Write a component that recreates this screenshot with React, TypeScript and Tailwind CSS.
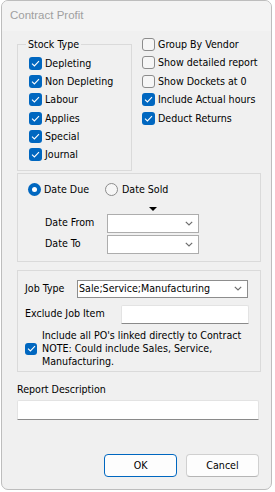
import React from "react";

const FONT = "font-['DejaVu_Sans_Condensed','Liberation_Sans',sans-serif]";

function CheckBox({ checked, small }: { checked: boolean; small?: boolean }) {
  const size = small ? "w-[12px] h-[12px]" : "w-[13px] h-[13px]";
  if (checked) {
    return (
      <div className={`${size} shrink-0 rounded-[3px] bg-[#0067c0] flex items-center justify-center`}>
        <svg width="9" height="7" viewBox="0 0 9 7">
          <path d="M1 3.6 L3.4 6 L8 1.2" stroke="white" strokeWidth="1.1" fill="none" />
        </svg>
      </div>
    );
  }
  return <div className={`${size} shrink-0 rounded-[3px] border border-[#8c8c8c] bg-[#f6f6f6]`} />;
}

function Radio({ checked }: { checked: boolean }) {
  if (checked) {
    return (
      <div className="w-[13px] h-[13px] shrink-0 rounded-full bg-[#0067c0] flex items-center justify-center">
        <div className="w-[5px] h-[5px] rounded-full bg-white" />
      </div>
    );
  }
  return <div className="w-[13px] h-[13px] shrink-0 rounded-full border border-[#8c8c8c] bg-[#f6f6f6]" />;
}

function Chevron() {
  return (
    <svg width="8" height="5" viewBox="0 0 8 5" className="shrink-0">
      <path d="M0.8 0.8 L4 4 L7.2 0.8" stroke="#707070" strokeWidth="1.2" fill="none" />
    </svg>
  );
}

function CheckRow({ checked, label, tall }: { checked: boolean; label: string; tall?: boolean }) {
  return (
    <div className={`flex items-center ${tall ? "h-[18.5px]" : "h-[18.2px]"}`}>
      <CheckBox checked={checked} />
      <span className="ml-[3px] whitespace-nowrap leading-[13px]">{label}</span>
    </div>
  );
}

export default function App() {
  return (
    <div className={`w-[275px] h-[492px] bg-white overflow-hidden ${FONT} text-[10.6px] text-black`}>
      <div className="ml-[1px] w-[271px] h-[490px] border border-[#bdbdbd] rounded-[7px] bg-[#f0f0f0] overflow-hidden flex flex-col">
        <div className="h-[30px] shrink-0 bg-[#f3f3f3] flex items-center pl-[8px] font-['Liberation_Sans',sans-serif] text-[11.5px] text-[#a0a0a0]">
          Contract Profit
        </div>
        <div className="flex-1 flex flex-col pl-[15px]">
          <div className="flex items-start">
            <fieldset className="mt-[6.5px] w-[115px] border border-[#dadada] pl-[11px] pt-[4px] pb-[6px]">
              <legend className="ml-[-3px] px-[2px] leading-[13px]">Stock Type</legend>
              <CheckRow checked label="Depleting" />
              <CheckRow checked label="Non Depleting" />
              <CheckRow checked label="Labour" />
              <CheckRow checked label="Applies" />
              <CheckRow checked label="Special" />
              <CheckRow checked label="Journal" />
            </fieldset>
            <div className="ml-[10px] mt-[4px] flex flex-col">
              <CheckRow tall checked={false} label="Group By Vendor" />
              <CheckRow tall checked={false} label="Show detailed report" />
              <CheckRow tall checked={false} label="Show Dockets at 0" />
              <CheckRow tall checked label="Include Actual hours" />
              <CheckRow tall checked label="Deduct Returns" />
            </div>
          </div>

          <div className="mt-[2px] w-[244px] border border-[#dadada] pl-[10px] pt-[9px] pb-[7px] flex flex-col">
            <div className="flex items-center h-[14px]">
              <div className="w-[77px] flex items-center">
                <Radio checked />
                <span className="ml-[3px] whitespace-nowrap">Date Due</span>
              </div>
              <Radio checked={false} />
              <span className="ml-[4px] whitespace-nowrap">Date Sold</span>
            </div>
            <div className="mt-[10px] ml-[121px] h-[4px] flex">
              <svg width="8" height="4" viewBox="0 0 8 4">
                <polygon points="0,0 8,0 4,4" fill="#000" />
              </svg>
            </div>
            <div className="mt-[3px] flex items-center">
              <span className="pl-[17px] w-[79px] whitespace-nowrap">Date From</span>
              <div className="w-[92px] h-[19px] bg-white border border-[#adadad] flex items-center justify-end pr-[5px]">
                <Chevron />
              </div>
            </div>
            <div className="mt-[2px] flex items-center">
              <span className="pl-[17px] w-[79px] whitespace-nowrap">Date To</span>
              <div className="w-[92px] h-[19px] bg-white border border-[#adadad] flex items-center justify-end pr-[5px]">
                <Chevron />
              </div>
            </div>
          </div>

          <div className="mt-[8px] w-[244px] border border-[#dadada] pl-[7px] pt-[9px] pb-[2px] flex flex-col">
            <div className="flex items-center h-[18px]">
              <span className="w-[52px] whitespace-nowrap">Job Type</span>
              <div className="w-[171px] h-[18px] bg-white border border-[#8d8d8d] flex items-center justify-between pl-[1px] pr-[5px]">
                <span className="whitespace-nowrap">Sale;Service;Manufacturing</span>
                <Chevron />
              </div>
            </div>
            <div className="mt-[7px] flex items-center">
              <span className="w-[96px] whitespace-nowrap">Exclude Job Item</span>
              <div className="w-[128px] h-[19px] bg-white border border-[#e3e3e3] border-b-[#8a8a8a] rounded-t-[2px]" />
            </div>
            <div className="mt-[5px] flex items-center">
              <CheckBox checked small />
              <span className="ml-[5px] whitespace-nowrap leading-[13.3px]">
                Include all PO's linked directly to Contract
                <br />
                NOTE: Could include Sales, Service,
                <br />
                Manufacturing.
              </span>
            </div>
          </div>

          <div className="mt-[11.5px] leading-[13px] whitespace-nowrap">Report Description</div>
          <div className="mt-[4px] w-[242px] h-[20px] bg-white border border-[#e3e3e3] border-b-[#8a8a8a] rounded-t-[2px]" />

          <div className="mt-[34px] w-[242px] flex justify-end gap-[9px]">
            <div className="w-[73px] h-[23px] rounded-[4px] border border-[#0067c0] bg-[#fdfdfd] flex items-center justify-center">
              OK
            </div>
            <div className="w-[73px] h-[23px] rounded-[4px] border border-[#d0d0d0] border-b-[#b5b5b5] bg-[#fdfdfd] flex items-center justify-center">
              Cancel
            </div>
          </div>
        </div>
      </div>
    </div>
  );
}
